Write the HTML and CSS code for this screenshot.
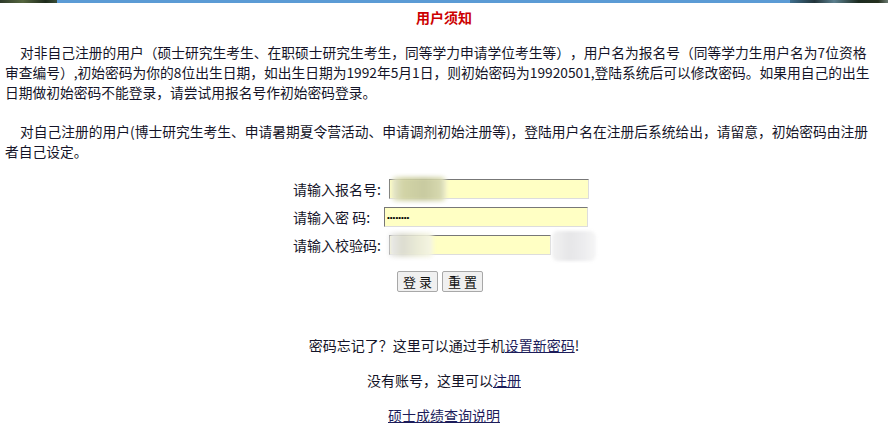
FILE: index.html
```html
<!DOCTYPE html>
<html lang="zh-CN">
<head>
<meta charset="utf-8">
<title>用户须知</title>
<link rel="stylesheet" href="styles.css">
</head>
<body>
<div class="topbar"><span class="tb-left"></span><span class="tb-mid"></span><span class="tb-right"></span></div>
<h1 class="title">用户须知</h1>
<div class="notice">
  <p>对非自己注册的用户（硕士研究生考生、在职硕士研究生考生，同等学力申请学位考生等），用户名为报名号（同等学力生用户名为7位资格审查编号）,初始密码为你的8位出生日期，如出生日期为1992年5月1日，则初始密码为19920501,登陆系统后可以修改密码。如果用自己的出生日期做初始密码不能登录，请尝试用报名号作初始密码登录。</p>
  <p>对自己注册的用户(博士研究生考生、申请暑期夏令营活动、申请调剂初始注册等)，登陆用户名在注册后系统给出，请留意，初始密码由注册者自己设定。</p>
</div>
<form class="login">
  <div class="row">
    <label class="lbl">请输入报名号:</label>
    <span class="field"><input class="inp" type="text"><span class="blur blur1"></span></span>
  </div>
  <div class="row">
    <label class="lbl">请输入密 码:</label>
    <span class="field"><input class="inp wide" type="password" value="12345678"></span>
  </div>
  <div class="row">
    <label class="lbl">请输入校验码:</label>
    <span class="field"><input class="inp short" type="text"><span class="blur blur3"></span><span class="captcha"></span></span>
  </div>
  <div class="buttons">
    <button type="button" class="btn">登 录</button>
    <button type="button" class="btn">重 置</button>
  </div>
</form>
<div class="links">
  <p>密码忘记了？这里可以通过手机<a href="#">设置新密码</a>!</p>
  <p>没有账号，这里可以<a href="#">注册</a></p>
  <p><a href="#">硕士成绩查询说明</a></p>
</div>
</body>
</html>
```
FILE: styles.css
```css
html, body {
  margin: 0;
  padding: 0;
  background: #fff;
}
body {
  font-family: "Noto Sans CJK SC", "Noto Sans", sans-serif;
  font-size: 14px;
  color: #141428;
  line-height: 20px;
}
.topbar {
  display: flex;
  height: 3px;
}
.tb-left {
  width: 57px;
  background: linear-gradient(90deg, #2e3a2a, #55663f 40%, #1e2a1c 80%, #3a4d36);
}
.tb-mid {
  flex: 1;
  background: #5b9bd5;
}
.tb-right {
  width: 98px;
  background: linear-gradient(90deg, #3f6f8e, #22343a 25%, #5b7f8e 45%, #1c2b20 70%, #25301f 90%, #6b7a70);
}
.title {
  margin: 4px 0 0;
  font-size: 14px;
  font-weight: bold;
  line-height: 20px;
  text-align: center;
  color: #cc0000;
}
.notice {
  padding: 0 10px 0 5px;
  font-size: 13.75px;
  text-spacing-trim: space-all;
}
.notice p {
  margin: 15px 0 19px;
  text-indent: 15px;
}
.notice p:last-child {
  margin-bottom: 0;
}
.login {
  margin-top: 14px;
  display: grid;
  grid-template-columns: 90px auto;
  justify-content: start;
  padding-left: 293px;
}
.row {
  grid-column: 1 / 3;
  display: grid;
  grid-template-columns: 90px auto;
  column-gap: 6px;
  align-items: center;
  height: 28px;
}
.lbl {
  white-space: pre;
}
.field {
  position: relative;
  display: flex;
  align-items: center;
}
.inp {
  box-sizing: border-box;
  width: 200px;
  height: 20px;
  margin: 0;
  padding: 0 2px;
  background: #ffffc4;
  border: 1px solid;
  border-color: #777 #ddd #ddd #777;
  font-family: "Liberation Sans", sans-serif;
  font-size: 12px;
  outline: none;
}
.wide {
  width: 204px;
  margin-left: -5px;
  font-size: 8px;
  color: #000;
}
.short {
  width: 162px;
}
.blur {
  position: absolute;
  top: -2px;
  height: 24px;
  border-radius: 4px;
  filter: blur(2px);
}
.blur1 {
  left: 3px;
  width: 54px;
  background: linear-gradient(90deg, #e6e6cf, #d2d4a6 20%, #c8caa0 60%, #d6d8ae 90%, #ececd4);
}
.blur3 {
  left: 0;
  width: 44px;
  background: linear-gradient(90deg, #ececec, #dcdcd0 30%, #ecedd8 70%, #f6f6e4);
}
.captcha {
  width: 44px;
  height: 30px;
  margin: -4px 0 -6px 1px;
  background: linear-gradient(90deg, #f2f2f2, #e6e6e8 40%, #ececee 70%, #f6f6f6);
  border-radius: 6px;
  filter: blur(1.5px);
}
.buttons {
  grid-column: 1 / 3;
  display: flex;
  gap: 4px;
  margin-top: 12px;
  padding-left: 104px;
}
.btn {
  box-sizing: border-box;
  width: 41px;
  height: 21px;
  padding: 0;
  background: #f0f0f0;
  border: 1px solid #a8a8a8;
  border-radius: 2px;
  font-family: "Noto Sans CJK SC", sans-serif;
  font-size: 13px;
  color: #111;
  line-height: 18px;
}
.links {
  margin-top: 43px;
  text-align: center;
}
.links p {
  margin: 0 0 15px;
  line-height: 20px;
}
.links a {
  color: #1c1c5a;
  text-decoration: underline;
}
```
